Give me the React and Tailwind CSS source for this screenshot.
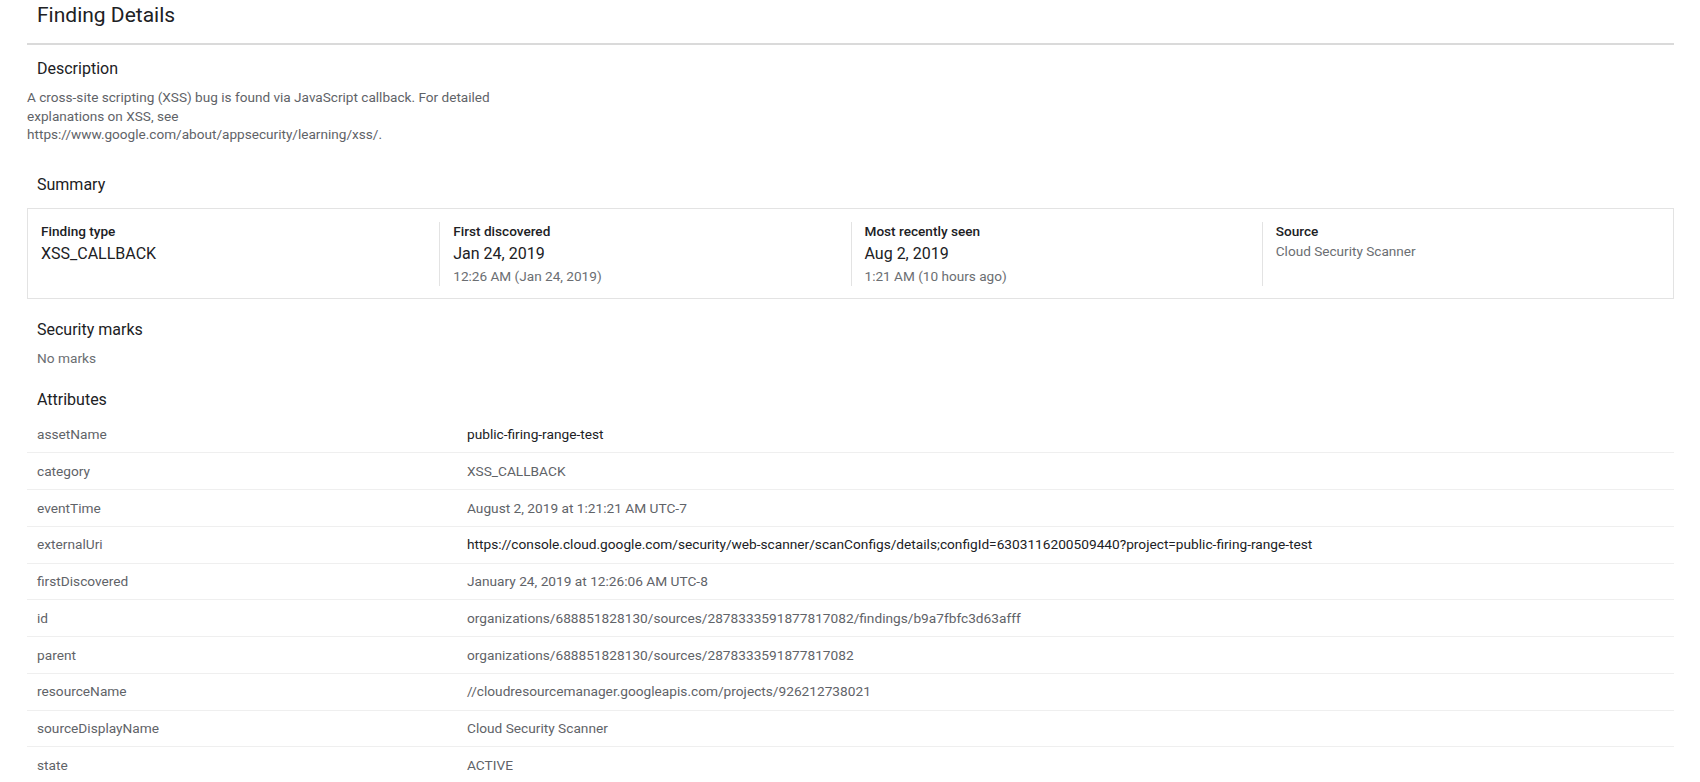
import React from "react";

const summary = [
  { label: "Finding type", main: "XSS_CALLBACK", sub: "" },
  { label: "First discovered", main: "Jan 24, 2019", sub: "12:26 AM (Jan 24, 2019)" },
  { label: "Most recently seen", main: "Aug 2, 2019", sub: "1:21 AM (10 hours ago)" },
  { label: "Source", main: "", sub: "Cloud Security Scanner" },
];

const attributes = [
  { name: "assetName", value: "public-firing-range-test", dark: true },
  { name: "category", value: "XSS_CALLBACK" },
  { name: "eventTime", value: "August 2, 2019 at 1:21:21 AM UTC-7" },
  {
    name: "externalUri",
    value:
      "https://console.cloud.google.com/security/web-scanner/scanConfigs/details;configId=6303116200509440?project=public-firing-range-test",
    dark: true,
  },
  { name: "firstDiscovered", value: "January 24, 2019 at 12:26:06 AM UTC-8" },
  { name: "id", value: "organizations/688851828130/sources/2878333591877817082/findings/b9a7fbfc3d63afff" },
  { name: "parent", value: "organizations/688851828130/sources/2878333591877817082" },
  { name: "resourceName", value: "//cloudresourcemanager.googleapis.com/projects/926212738021" },
  { name: "sourceDisplayName", value: "Cloud Security Scanner" },
  { name: "state", value: "ACTIVE" },
];

function SectionTitle({ children, className = "" }) {
  return <h2 className={`pl-[10px] text-[16px] text-[#202124] ${className}`}>{children}</h2>;
}

export default function App() {
  return (
    <div className="min-h-screen bg-white font-['Roboto',sans-serif] text-[#202124]">
      <div className="px-[27px] pr-[26px]">
        {/* header */}
        <div className="h-[45px] border-b-2 border-[#dadada] pl-[10px] pt-[2px]">
          <h1 className="text-[21px] leading-[26px]">Finding Details</h1>
        </div>

        {/* description */}
        <SectionTitle className="mt-[13px] leading-[22px]">Description</SectionTitle>
        <p className="mt-[8px] max-w-[490px] text-[13.6px] leading-[18.5px] text-[#5f6368]">
          A cross-site scripting (XSS) bug is found via JavaScript callback. For detailed explanations on XSS, see
          https://www.google.com/about/appsecurity/learning/xss/.
        </p>

        {/* summary */}
        <SectionTitle className="mt-[30px] leading-[22px]">Summary</SectionTitle>
        <div className="mt-[12px] grid h-[91px] grid-cols-4 border border-[#e3e3e3] py-[13px]">
          {summary.map((s, i) => (
            <div key={s.label} className={`pl-[13px] ${i > 0 ? "border-l border-[#e3e3e3]" : ""}`}>
              <div className="text-[13.6px] leading-[18px] font-medium text-[#202124]">{s.label}</div>
              {s.main && <div className="mt-[3px] text-[16px] leading-[22px] text-[#202124]">{s.main}</div>}
              {s.sub && <div className="mt-[2px] text-[13.6px] leading-[19px] text-[#6b6e72]">{s.sub}</div>}
            </div>
          ))}
        </div>

        {/* security marks */}
        <SectionTitle className="mt-[20px] leading-[22px]">Security marks</SectionTitle>
        <div className="mt-[8px] pl-[10px] text-[13.7px] leading-[18px] text-[#6b6e72]">No marks</div>

        {/* attributes */}
        <SectionTitle className="mt-[22px] leading-[22px]">Attributes</SectionTitle>
        <div className="mt-[6px]">
          {attributes.map((a) => (
            <div key={a.name} className="flex h-[36.75px] items-center border-b border-[#efefef] text-[13.7px]">
              <div className="w-[440px] shrink-0 pl-[10px] text-[#5f6368]">{a.name}</div>
              <div className={a.dark ? "text-[#202124]" : "text-[#5f6368]"}>{a.value}</div>
            </div>
          ))}
        </div>
      </div>
    </div>
  );
}
